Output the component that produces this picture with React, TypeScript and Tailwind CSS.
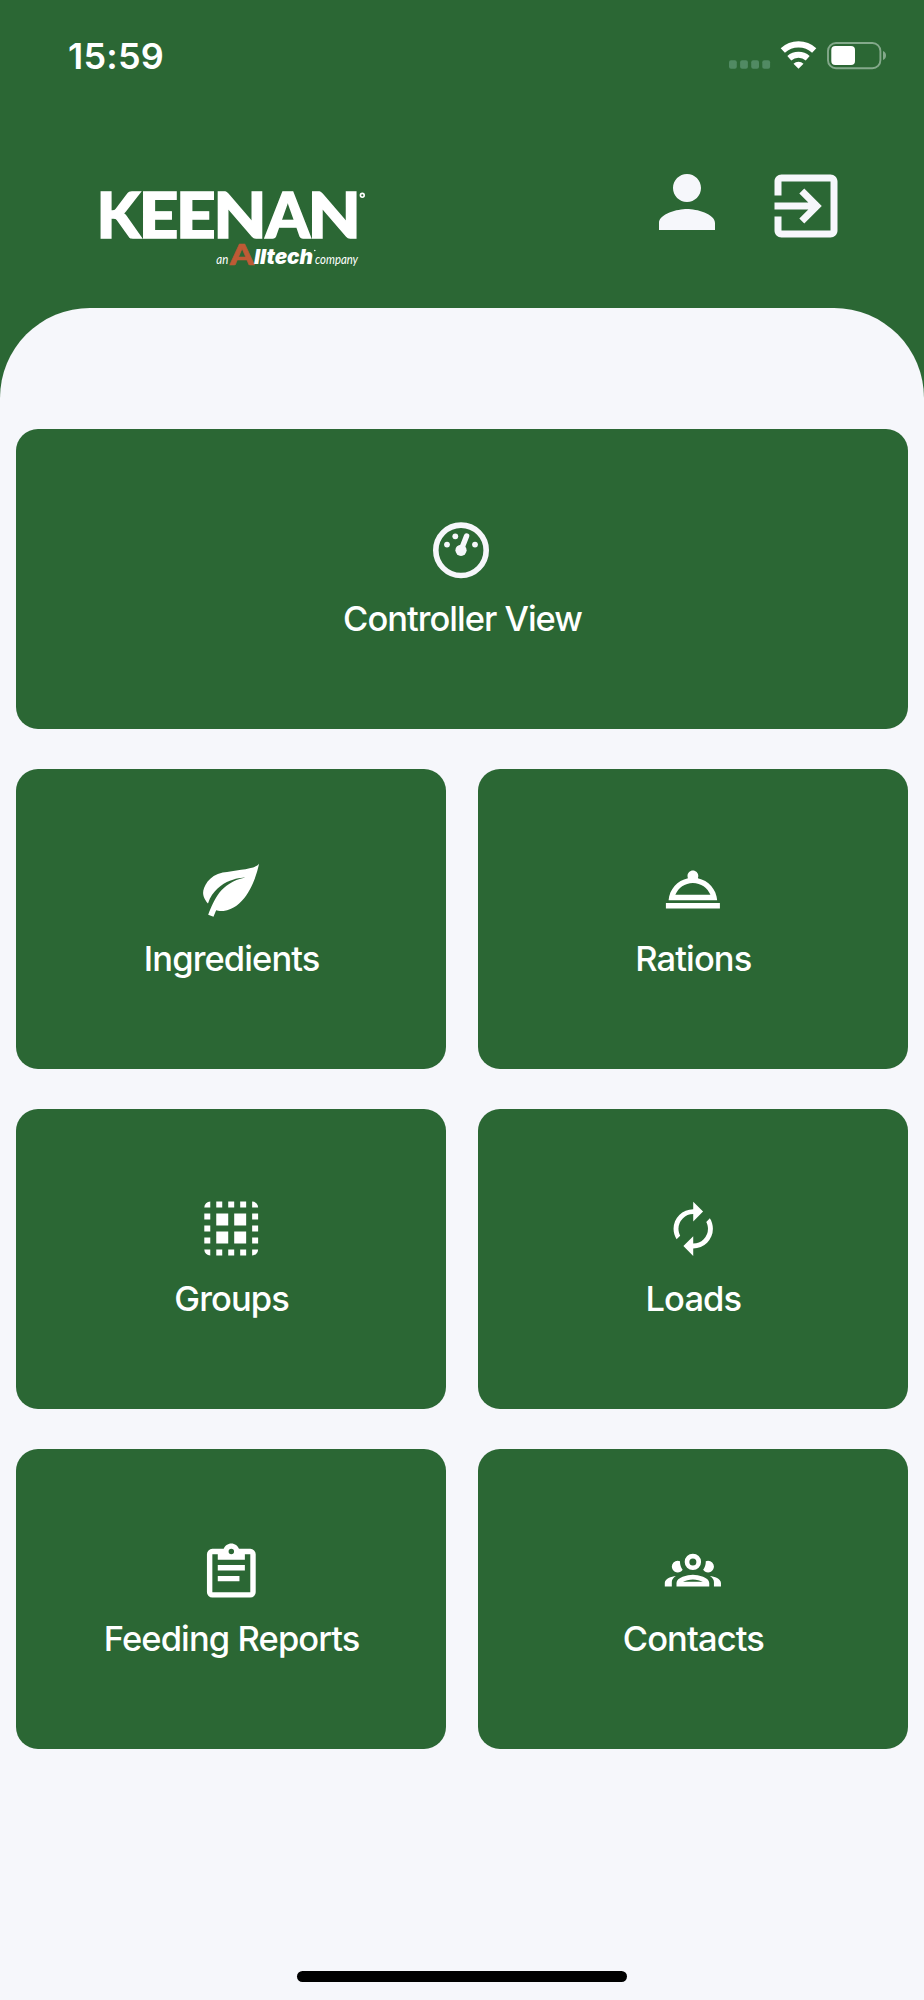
import type { ReactNode } from "react";

function StatusBar() {
  return (
    <div className="flex h-[112px] items-start justify-between pl-[68px] pr-[38px] pt-[34px]">
      <span className="text-[36px] font-semibold leading-[44px] tracking-[0.2px] text-white">15:59</span>
      <svg className="mt-1" width="158" height="36" viewBox="728 38 158 36" fill="none">
        <g fill="#518a63">
          <rect x="729" y="60.2" width="7.8" height="8.6" rx="2" />
          <rect x="740.1" y="60.2" width="7.8" height="8.6" rx="2" />
          <rect x="751.2" y="60.2" width="7.8" height="8.6" rx="2" />
          <rect x="762.3" y="60.2" width="7.8" height="8.6" rx="2" />
        </g>
        <path d="M782.8 50.6a23 23 0 0 1 31.4 0" stroke="#fff" strokeWidth="6.2" />
        <path d="M789.3 58.2a14 14 0 0 1 18.4 0" stroke="#fff" strokeWidth="6" />
        <path d="M798.5 68.8l-5-5.1a7.4 7.4 0 0 1 10 0z" fill="#fff" />
        <rect x="828" y="43" width="52.4" height="25.2" rx="8" stroke="#84a98b" strokeWidth="1.9" />
        <rect x="831.3" y="46" width="23.7" height="19" rx="4" fill="#fff" />
        <path d="M883 51v9c4-1.2 4-7.8 0-9z" fill="#84a98b" />
      </svg>
    </div>
  );
}

function Logo() {
  return (
    <svg width="290" height="94" viewBox="88 178 290 94" fill="#fff">
      <g fontFamily="Lato, sans-serif">
        <text y="238.2" fontSize="63.5" fontWeight="900" stroke="#fff" strokeWidth="1.4">
          <tspan x="96.6">K</tspan>
          <tspan x="138.4" textLength="40" lengthAdjust="spacingAndGlyphs">E</tspan>
          <tspan x="175.7" textLength="40" lengthAdjust="spacingAndGlyphs">E</tspan>
          <tspan x="213.2" textLength="53.5" lengthAdjust="spacingAndGlyphs">N</tspan>
          <tspan x="265.6">A</tspan>
          <tspan x="307.5" textLength="53.5" lengthAdjust="spacingAndGlyphs">N</tspan>
        </text>
        <text x="216.3" y="264.3" fontSize="12.5" fontStyle="italic" textLength="12" lengthAdjust="spacingAndGlyphs">an</text>
        <text x="229.8" y="264.6" fontSize="29" fontWeight="900" fill="#bf5a35" stroke="#bf5a35" strokeWidth="0.6" textLength="24" lengthAdjust="spacingAndGlyphs">A</text>
        <text x="315" y="264.3" fontSize="12.5" fontStyle="italic" textLength="43" lengthAdjust="spacingAndGlyphs">company</text>
      </g>
      <text x="254" y="264.3" fontFamily="Inter, sans-serif" fontSize="20.5" fontWeight="900" fontStyle="italic" textLength="59" lengthAdjust="spacingAndGlyphs">lltech</text>
      <circle cx="362.3" cy="195.3" r="1.9" fill="none" stroke="#fff" strokeWidth="1.6" />
      <circle cx="314.8" cy="250.5" r="0.8" />
    </svg>
  );
}

function GaugeIcon() {
  return (
    <g transform="translate(35 36.3)" fill="#f6f7fb">
      <circle r="25.2" fill="none" stroke="#f6f7fb" strokeWidth="5.6" />
      <circle cx="-14" cy="-5.7" r="2.9" />
      <circle cx="-5.7" cy="-14" r="2.9" />
      <circle cx="14" cy="-5.7" r="2.9" />
      <circle r="5.6" />
      <path d="M0 0L5.6-14.3" stroke="#f6f7fb" strokeWidth="5.4" strokeLinecap="round" />
    </g>
  );
}

function LeafIcon() {
  return (
    <path
      transform="translate(2.5 1.1) scale(2.8)"
      d="M17,8C8,10 5.9,16.17 3.82,21.34L5.71,22L6.66,19.7C7.14,19.87 7.64,20 8,20C19,20 22,3 22,3C21,5 14,5.25 9,6.25C4,7.25 2,11.5 2,13.5C2,15.5 3.75,17.25 3.75,17.25C7,8 17,8 17,8Z"
    />
  );
}

function ClocheIcon() {
  return (
    <path
      transform="translate(3.5 3.1) scale(2.7)"
      fillRule="evenodd"
      d="M2 17h20v2H2zM13.84 7.79c.1-.24.16-.51.16-.79 0-1.1-.9-2-2-2s-2 .9-2 2c0 .28.06.55.16.79C6.25 8.6 3.27 11.93 3 16h18c-.27-4.07-3.25-7.4-7.16-8.21zM12 9.58c2.95 0 5.47 1.83 6.5 4.41h-13c1.03-2.58 3.55-4.41 6.5-4.41z"
    />
  );
}

function SelectGroupIcon() {
  return (
    <path
      transform="translate(9.3 7.6) scale(5.98)"
      d="M0 1A1 1 0 0 1 1 0V1ZM2 0h1v1H2zM4 0h1v1H4zM6 0h1v1H6zM8 0A1 1 0 0 1 9 1H8ZM0 2h1v1H0zM0 4h1v1H0zM0 6h1v1H0zM8 2h1v1H8zM8 4h1v1H8zM8 6h1v1H8zM0 8H1V9A1 1 0 0 1 0 8ZM2 8h1v1H2zM4 8h1v1H4zM6 8h1v1H6zM8 8H9A1 1 0 0 1 8 9ZM2 2h2v2H2zM5 2h2v2H5zM2 5h2v2H2zM5 5h2v2H5z"
    />
  );
}

function RenewIcon() {
  return (
    <path
      transform="translate(6.7 5.3) scale(2.46)"
      d="M12,6V9L16,5L12,1V4A8,8 0 0,0 4,12C4,13.57 4.46,15.03 5.24,16.26L6.7,14.8C6.25,13.97 6,13 6,12A6,6 0 0,1 12,6M18.76,7.74L17.3,9.2C17.74,10.04 18,11 18,12A6,6 0 0,1 12,18V15L8,19L12,23V20A8,8 0 0,0 20,12C20,10.43 19.54,8.97 18.76,7.74Z"
    />
  );
}

function ClipboardIcon() {
  return (
    <path
      transform="translate(3.8 5.7) scale(2.71)"
      d="M19,3H14.82C14.4,1.84 13.3,1 12,1C10.7,1 9.6,1.84 9.18,3H5A2,2 0 0,0 3,5V19A2,2 0 0,0 5,21H19A2,2 0 0,0 21,19V5A2,2 0 0,0 19,3M12,3A1,1 0 0,1 13,4A1,1 0 0,1 12,5A1,1 0 0,1 11,4A1,1 0 0,1 12,3M7,7H17V5H19V19H5V5H7V7M17,11H7V9H17V11M15,15H7V13H15V15Z"
    />
  );
}

function PeopleIcon() {
  return (
    <path
      transform="translate(7.8 7) scale(2.34)"
      d="M12,5A3.5,3.5 0 0,0 8.5,8.5A3.5,3.5 0 0,0 12,12A3.5,3.5 0 0,0 15.5,8.5A3.5,3.5 0 0,0 12,5M12,7A1.5,1.5 0 0,1 13.5,8.5A1.5,1.5 0 0,1 12,10A1.5,1.5 0 0,1 10.5,8.5A1.5,1.5 0 0,1 12,7M5.5,8A2.5,2.5 0 0,0 3,10.5C3,11.44 3.53,12.25 4.29,12.68C4.65,12.88 5.06,13 5.5,13C5.94,13 6.35,12.88 6.71,12.68C7.08,12.47 7.39,12.17 7.62,11.81C6.89,10.86 6.5,9.7 6.5,8.5C6.5,8.41 6.5,8.31 6.5,8.22C6.2,8.08 5.86,8 5.5,8M18.5,8C18.14,8 17.8,8.08 17.5,8.22C17.5,8.31 17.5,8.41 17.5,8.5C17.5,9.7 17.11,10.86 16.38,11.81C16.5,12 16.63,12.15 16.78,12.3C16.94,12.45 17.1,12.58 17.29,12.68C17.65,12.88 18.06,13 18.5,13C18.94,13 19.35,12.88 19.71,12.68C20.47,12.25 21,11.44 21,10.5A2.5,2.5 0 0,0 18.5,8M12,14C9.66,14 5,15.17 5,17.5V19H19V17.5C19,15.17 14.34,14 12,14M4.71,14.55C2.78,14.78 0,15.76 0,17.5V19H3V17.07C3,16.06 3.69,15.22 4.71,14.55M19.29,14.55C20.31,15.22 21,16.06 21,17.07V19H24V17.5C24,15.76 21.22,14.78 19.29,14.55M12,16C13.53,16 15.24,16.5 16.23,17H7.77C8.76,16.5 10.47,16 12,16Z"
    />
  );
}

function Tile({ label, icon, className = "" }: { label: string; icon: ReactNode; className?: string }) {
  return (
    <button
      className={`flex flex-col items-center rounded-[22px] bg-[#2b6734] pt-[85.4px] text-[34.5px] font-medium leading-[40px] text-white ${className}`}
    >
      <svg width="72" height="72" viewBox="0 0 72 72" fill="#fff">
        {icon}
      </svg>
      <span className="ml-[1px] mt-[12.8px] whitespace-nowrap">{label}</span>
    </button>
  );
}

export default function App() {
  return (
    <div className="flex h-[2000px] w-[924px] flex-col bg-[#2b6734] font-['Inter',sans-serif]">
      <header className="h-[308.4px] shrink-0">
        <StatusBar />
        <div className="flex items-start justify-between pl-[88px] pr-[76.5px]">
          <div className="pt-[66px]">
            <Logo />
          </div>
          <div className="flex gap-[35px] pt-[48px]">
            <svg width="84" height="84" viewBox="0 0 24 24" fill="#f6f7fb">
              <path d="M12 12c2.21 0 4-1.79 4-4s-1.79-4-4-4-4 1.79-4 4 1.79 4 4 4zm0 2c-2.67 0-8 1.34-8 4v2h16v-2c0-2.66-5.33-4-8-4z" />
            </svg>
            <svg className="mt-[3.5px]" width="84" height="84" viewBox="0 0 24 24" fill="#f6f7fb">
              <path d="M10.09 15.59L11.5 17l5-5-5-5-1.41 1.41L12.67 11H3v2h9.67l-2.58 2.59zM19 3H5c-1.11 0-2 .9-2 2v4h2V5h14v14H5v-4H3v4c0 1.1.89 2 2 2h14c1.1 0 2-.9 2-2V5c0-1.1-.9-2-2-2z" />
            </svg>
          </div>
        </div>
      </header>
      <main className="flex flex-1 flex-col items-center rounded-t-[90px] bg-[#f6f7fb] px-4 pt-[120.2px]">
        <div className="grid w-full auto-rows-[300px] grid-cols-2 gap-x-[31.4px] gap-y-[40.2px]">
          <Tile label="Controller View" icon={<GaugeIcon />} className="col-span-2 tracking-[-1px]" />
          <Tile label="Ingredients" icon={<LeafIcon />} className="tracking-[-0.9px]" />
          <Tile label="Rations" icon={<ClocheIcon />} className="tracking-[-0.9px]" />
          <Tile label="Groups" icon={<SelectGroupIcon />} className="tracking-[-0.9px]" />
          <Tile label="Loads" icon={<RenewIcon />} className="tracking-[-0.9px]" />
          <Tile label="Feeding Reports" icon={<ClipboardIcon />} className="tracking-[-0.9px]" />
          <Tile label="Contacts" icon={<PeopleIcon />} className="tracking-[-0.9px]" />
        </div>
        <div className="mb-[18px] mt-auto h-[11px] w-[330px] rounded-full bg-black" />
      </main>
    </div>
  );
}
